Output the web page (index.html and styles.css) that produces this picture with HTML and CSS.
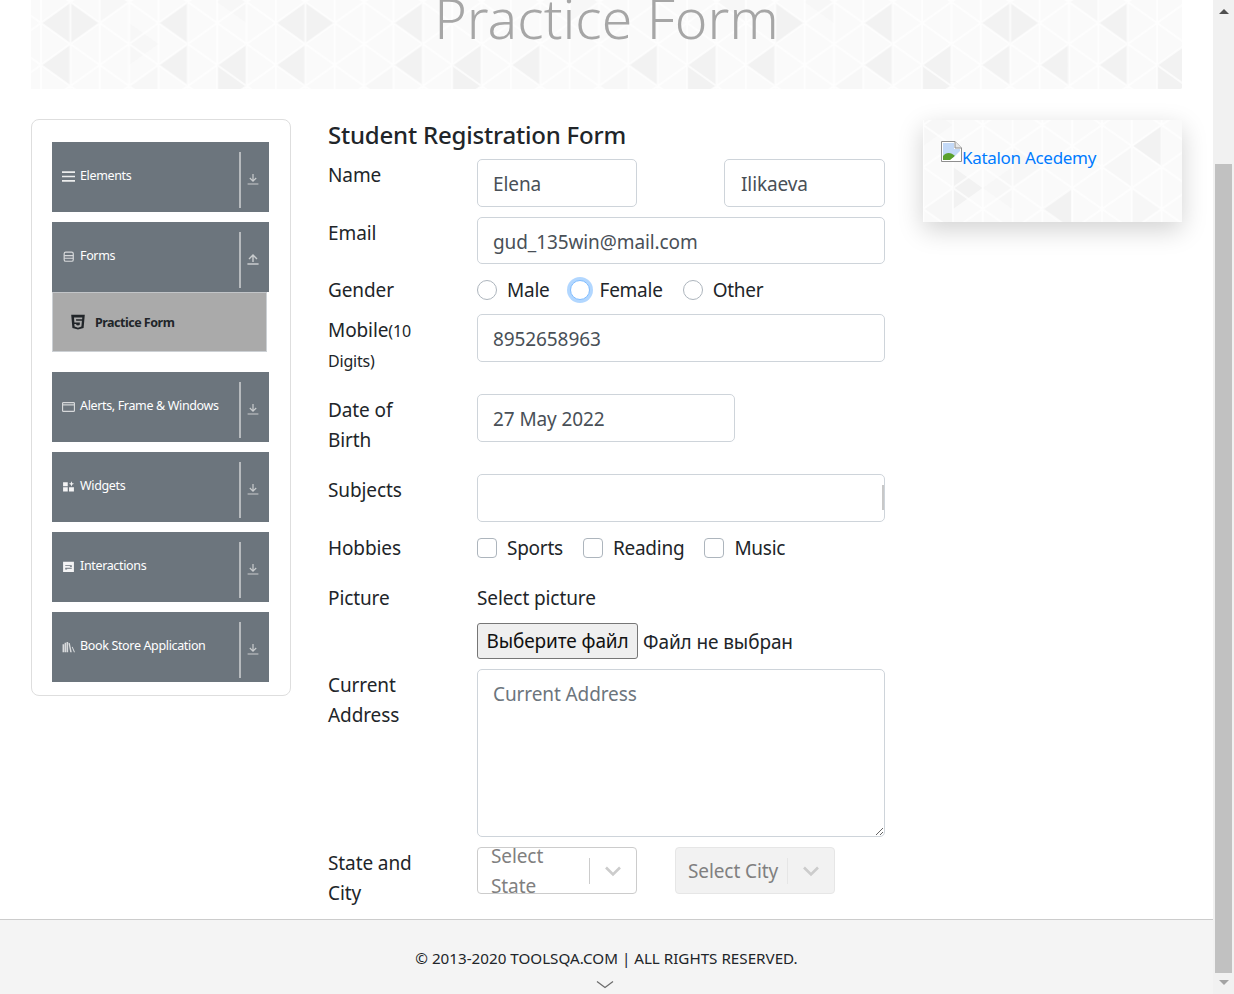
FILE: index.html
```html
<!DOCTYPE html>
<html lang="en">
<head>
<meta charset="utf-8">
<title>Practice Form</title>
<link rel="stylesheet" href="styles.css">
</head>
<body>
<svg class="sprite" aria-hidden="true">
  <defs>
    <pattern id="lines" width="58.74" height="42" patternUnits="userSpaceOnUse" patternTransform="translate(10 23)">
      <path class="mesh" d="M0 0V42M29.37 0V42M58.74 0V42M0 0L29.37 21L58.74 0M0 42L29.37 21L58.74 42M0 0L-29.37 21M58.74 0L29.37 -21M0 42L29.37 63"/>
    </pattern>
    <pattern id="lines2" width="59.6" height="42" patternUnits="userSpaceOnUse" patternTransform="translate(30 26)">
      <path class="mesh" d="M0 0V42M29.8 0V42M59.6 0V42M0 0L29.8 21L59.6 0M0 42L29.8 21L59.6 42"/>
    </pattern>
    <polygon id="tl" points="0,0 29.37,-21 29.37,21"/>
    <polygon id="tr" points="0,-21 29.37,0 0,21"/>
    <symbol id="down" viewBox="0 0 12 12"><path d="M6 1V7.8M2.8 5L6 8.2L9.2 5M.6 11H11.4" fill="none" stroke="currentColor" stroke-width="1.2"/></symbol>
    <symbol id="up" viewBox="0 0 12 12"><path d="M6 9V2.2M2 6L6 2L10 6M.4 11H11.6" fill="none" stroke="currentColor" stroke-width="1.4"/></symbol>
    <symbol id="chev" viewBox="0 0 20 20"><path d="M3 6.5L10 13.5L17 6.5" fill="none" stroke="currentColor" stroke-width="2.6"/></symbol>
  </defs>
</svg>

<div class="app">
  <div class="page">
    <div class="content">
      <header class="banner">
        <svg class="pattern" width="1151" height="89" aria-hidden="true">
          <rect class="tile" width="1151" height="89"/>
          <g class="shade">
            <use href="#tl" x="10" y="23"/><use href="#tr" x="39.4" y="23"/><use href="#tl" x="127.5" y="23"/><use href="#tl" x="245" y="23"/><use href="#tr" x="274.3" y="23"/><use href="#tl" x="362.4" y="23"/>
            <use href="#tl" x="10" y="65"/><use href="#tl" x="127.5" y="65"/><use href="#tl" x="186.2" y="65"/><use href="#tl" x="245" y="65"/><use href="#tr" x="186.2" y="86"/><use href="#tl" x="362.4" y="65"/>
            <use href="#tl" x="421.2" y="65"/><use href="#tl" x="479.9" y="65"/><use href="#tr" x="421.2" y="86"/><use href="#tl" x="597.4" y="65"/><use href="#tl" x="656.1" y="65"/><use href="#tl" x="714.9" y="65"/>
            <use href="#tr" x="744.3" y="23"/><use href="#tl" x="832.4" y="23"/><use href="#tl" x="949.8" y="23"/><use href="#tr" x="979.2" y="23"/><use href="#tl" x="1067.3" y="23"/>
            <use href="#tl" x="832.4" y="65"/><use href="#tl" x="891.1" y="65"/><use href="#tl" x="949.8" y="65"/><use href="#tl" x="1008.6" y="65"/><use href="#tl" x="1067.3" y="65"/><use href="#tl" x="1126" y="65"/>
            <use href="#tr" x="891.1" y="86"/><use href="#tr" x="656.1" y="86"/><use href="#tr" x="1126" y="86"/>
          </g>
          <g class="shade-soft">
            <use href="#tl" x="98.1" y="86"/><use href="#tl" x="333.1" y="86"/><use href="#tl" x="568" y="86"/><use href="#tr" x="68.7" y="2"/><use href="#tl" x="186.2" y="2"/><use href="#tr" x="538.7" y="2"/><use href="#tl" x="685.5" y="2"/><use href="#tl" x="773.6" y="2"/>
            <use href="#tr" x="98.1" y="44"/><use href="#tl" x="803" y="86"/><use href="#tl" x="1038" y="2"/>
          </g>
          <rect class="mesh-fill" width="1151" height="89"/>
        </svg>
        <h1 class="page-title">Practice Form</h1>
      </header>

      <div class="columns">
        <nav class="sidebar">
          <div class="group">
            <div class="group-head">
              <svg class="g-icon" viewBox="0 0 12 12"><path d="M0 2H12M0 6H12M0 10H12" class="ic-stroke"/></svg>
              <span class="g-name">Elements</span>
              <span class="g-rule"></span>
              <svg class="g-arrow"><use href="#down"/></svg>
            </div>
          </div>
          <div class="group">
            <div class="group-head">
              <svg class="g-icon" viewBox="0 0 12 12"><rect x="2" y="2" width="8.4" height="8.4" rx="1.5" class="ic-thin"/><path d="M2 5.2H10.4M2 7.6H10.4" class="ic-thin"/></svg>
              <span class="g-name">Forms</span>
              <span class="g-rule"></span>
              <svg class="g-arrow"><use href="#up"/></svg>
            </div>
            <div class="sub-item">
              <svg class="html5" viewBox="0 0 16 16"><path fill-rule="evenodd" d="M1.2 .8H14.8L13.6 14L8 15.6L2.4 14ZM4 3.4L4.4 8.6H9.9L9.7 11L8 11.6L6.3 11L6.2 9.9H4.3L4.6 12.6L8 13.7L11.4 12.6L11.9 6.7H6.2L6 5.2H12.1L12.3 3.4Z"/></svg>
              <span>Practice Form</span>
            </div>
          </div>
          <div class="group">
            <div class="group-head">
              <svg class="g-icon" viewBox="0 0 12 12"><rect x=".5" y="2.5" width="11" height="8" rx=".8" class="ic-thin"/><path d="M.5 4.5H11.5" class="ic-thin"/></svg>
              <span class="g-name">Alerts, Frame &amp; Windows</span>
              <span class="g-rule"></span>
              <svg class="g-arrow"><use href="#down"/></svg>
            </div>
          </div>
          <div class="group">
            <div class="group-head">
              <svg class="g-icon" viewBox="0 0 12 12"><path class="ic-fill" d="M1 2H5.3V5.7H1ZM1 6.8H5.3V10.5H1ZM6.5 6.8H11V10.5H6.5ZM8.7 1.2L9.5 2.9L11.2 3.5L9.5 4.2L8.7 5.9L8 4.2L6.3 3.5L8 2.9Z"/></svg>
              <span class="g-name">Widgets</span>
              <span class="g-rule"></span>
              <svg class="g-arrow"><use href="#down"/></svg>
            </div>
          </div>
          <div class="group">
            <div class="group-head">
              <svg class="g-icon" viewBox="0 0 12 12"><path class="ic-fill" fill-rule="evenodd" d="M1 1.5H11V11H1ZM3 4.8V5.6H8L7 6.4H9V4.8ZM3 7.2V8.8H5L4 8H9V7.2Z"/></svg>
              <span class="g-name">Interactions</span>
              <span class="g-rule"></span>
              <svg class="g-arrow"><use href="#down"/></svg>
            </div>
          </div>
          <div class="group">
            <div class="group-head">
              <svg class="g-icon" viewBox="0 0 12 12"><path class="ic-dim" d="M.5 4H2V11.2H.5ZM2.4 2.5H3.8V11.2H2.4ZM4.2 1.8H5.7V11.2H4.2ZM6 3L7.2 2.7L9 11.2H7.6ZM9 6.5L9.8 6.2L12 11.2H11Z"/></svg>
              <span class="g-name">Book Store Application</span>
              <span class="g-rule"></span>
              <svg class="g-arrow"><use href="#down"/></svg>
            </div>
          </div>
        </nav>

        <main class="form-col">
          <h5 class="form-title">Student Registration Form</h5>
          <form class="form">
            <div class="row">
              <label class="lbl">Name</label>
              <div class="fields split">
                <input class="ctl half" type="text" value="Elena">
                <input class="ctl half half-wide" type="text" value="Ilikaeva">
              </div>
            </div>
            <div class="row">
              <label class="lbl">Email</label>
              <div class="fields"><input class="ctl ctl-47" type="text" value="gud_135win@mail.com"></div>
            </div>
            <div class="row row-tight">
              <label class="lbl">Gender</label>
              <div class="fields choices">
                <span class="choice"><span class="radio"></span>Male</span>
                <span class="choice"><span class="radio focus"></span>Female</span>
                <span class="choice"><span class="radio"></span>Other</span>
              </div>
            </div>
            <div class="row">
              <label class="lbl">Mobile<small class="hint">(10 Digits)</small></label>
              <div class="fields"><input class="ctl" type="text" value="8952658963"></div>
            </div>
            <div class="row">
              <label class="lbl">Date of Birth</label>
              <div class="fields"><input class="ctl date" type="text" value="27 May 2022"></div>
            </div>
            <div class="row">
              <label class="lbl">Subjects</label>
              <div class="fields"><div class="ctl subject"><span class="caret"></span></div></div>
            </div>
            <div class="row">
              <label class="lbl">Hobbies</label>
              <div class="fields choices">
                <span class="choice"><span class="check"></span>Sports</span>
                <span class="choice"><span class="check"></span>Reading</span>
                <span class="choice"><span class="check"></span>Music</span>
              </div>
            </div>
            <div class="row">
              <label class="lbl">Picture</label>
              <div class="fields">
                <div class="pic-label">Select picture</div>
                <div class="file"><span class="file-btn">Выберите файл</span><span class="file-name">Файл не выбран</span></div>
              </div>
            </div>
            <div class="row">
              <label class="lbl">Current Address</label>
              <div class="fields"><textarea class="ctl area" placeholder="Current Address"></textarea></div>
            </div>
            <div class="row">
              <label class="lbl">State and City</label>
              <div class="fields split selects">
                <div class="sel">
                  <div class="sel-val">Select State</div>
                  <span class="sel-sep"></span>
                  <svg class="sel-chev"><use href="#chev"/></svg>
                </div>
                <div class="sel sel-off">
                  <div class="sel-val">Select City</div>
                  <span class="sel-sep"></span>
                  <svg class="sel-chev"><use href="#chev"/></svg>
                </div>
              </div>
            </div>
          </form>
        </main>

        <aside class="ad-col">
          <div class="ad">
            <svg class="pattern" width="259" height="102" aria-hidden="true">
              <rect class="tile" width="259" height="102"/>
              <g class="shade-soft">
                <use href="#tr" x="90" y="47"/><use href="#tl" x="60" y="68"/><use href="#tl" x="0" y="89"/><use href="#tr" x="209" y="89"/><use href="#tl" x="180" y="47"/><use href="#tr" x="0" y="5"/>
              </g>
              <g class="shade">
                <use href="#tl" x="119" y="89"/><use href="#tr" x="30" y="68"/><use href="#tl" x="210" y="26"/>
              </g>
              <rect class="mesh-fill2" width="259" height="102"/>
            </svg>
            <a class="ad-link" href="#">
              <svg class="broken" viewBox="0 0 21 21"><path d="M.5 .5H14L20.5 7V20.5H.5Z" fill="#fff" stroke="#8e8e8e"/><path d="M2 2H13V8H19V14L15 17H2Z" fill="#c3d9f7"/><path d="M2 19V15C5 11 10 11 14 15L9 19Z" fill="#5aa02c"/><path d="M20 9L9 20H20Z" fill="#fff"/><path d="M14 .5V7H20.5" fill="#e8e8e8" stroke="#8e8e8e"/></svg><span class="ad-text">Katalon Acedemy</span>
            </a>
          </div>
        </aside>
      </div>
    </div>
    <footer class="footer">
      <span class="copy">© 2013-2020 TOOLSQA.COM | ALL RIGHTS RESERVED.</span>
      <svg class="foot-chev" viewBox="0 0 18 9"><path d="M1 1.5L9 7.5L17 1.5" fill="none" stroke="#6b6b6b" stroke-width="1.2"/></svg>
    </footer>
  </div>
  <div class="scrollbar">
    <span class="sb-up"></span>
    <span class="sb-thumb"></span>
    <span class="sb-down"></span>
  </div>
</div>
</body>
</html>
```

FILE: styles.css
```css
* { box-sizing: border-box; }
html, body { height: 100%; margin: 0; overflow: hidden; }
body {
  font-family: "Noto Sans", "Open Sans", "Liberation Sans", sans-serif;
  font-size: 19px;
  line-height: 30px;
  letter-spacing: -.1px;
  color: #212529;
  background: #fff;
}
.sprite { position: absolute; width: 0; height: 0; }
.mesh { fill: none; stroke: #fff; stroke-width: 2; stroke-opacity: .7; }

.app { display: flex; height: 994px; }
.page { width: 1213px; display: flex; flex-direction: column; }
.content { flex: 1; min-height: 0; overflow: hidden; padding: 0 31px; }

/* banner */
.banner { position: relative; height: 89px; overflow: hidden; display: flex; justify-content: center; }
.pattern { position: absolute; left: 0; top: 0; }
.tile { fill: #fafafa; }
.shade { fill: #f2f2f2; }
.shade-soft { fill: #f7f7f7; }
.mesh-fill { fill: url(#lines); }
.mesh-fill2 { fill: url(#lines2); }
.page-title {
  position: relative;
  margin: -27px 0 0;
  font-size: 55.4px;
  line-height: 90px;
  font-weight: 300;
  letter-spacing: 0;
  color: #a6a6a6;
}

.columns { display: flex; margin-top: 30px; align-items: flex-start; }

/* sidebar */
.sidebar {
  width: 260px;
  flex: none;
  border: 1px solid #dedede;
  border-radius: 8px;
  padding: 22px 21px 13px 20px;
  display: flex;
  flex-direction: column;
  gap: 10px;
}
.group-head {
  height: 70px;
  background: #6c757d;
  color: #fff;
  display: flex;
  align-items: flex-start;
  padding: 10px 0 0 10px;
}
.g-icon { width: 13px; height: 13px; flex: none; margin: 18px 5px 0 0; }
.ic-stroke { fill: none; stroke: #eceded; stroke-width: 1.6; }
.ic-thin { fill: none; stroke: #d6d8da; stroke-width: 1.1; }
.ic-fill { fill: #f4f4f5; }
.ic-dim { fill: #d8dadc; }
.g-name { flex: 1; font-size: 12.5px; line-height: 18px; letter-spacing: -.35px; margin-top: 15px; white-space: nowrap; }
.g-rule { width: 2px; height: 56px; background: #b6babd; flex: none; }
.g-arrow { width: 12px; height: 12px; flex: none; margin: 21px 10px 0 6px; color: #c9ccce; }
.sub-item {
  width: 215px;
  height: 60px;
  background: #aaa;
  border: 1px solid #ccd0d4;
  border-top-color: #c2c5c8;
  display: flex;
  align-items: center;
  padding-left: 17px;
  margin-bottom: 10px;
  font-size: 12.5px;
  font-weight: 700;
  letter-spacing: -.5px;
}
.sub-item span { position: relative; top: 1px; }
.html5 { width: 16px; height: 16px; margin-right: 9px; fill: #212529; flex: none; }

/* form */
.form-col { width: 557px; flex: none; margin-left: 37px; }
.form-title { margin: 0 0 9px; padding-top: 1px; font-size: 24px; line-height: 30px; font-weight: 500; letter-spacing: -.2px; }
.row { display: flex; margin-bottom: 10px; }
.row-tight { margin-bottom: 0; }
.lbl { width: 149px; flex: none; padding: 1px 40px 9px 0; }
.hint { font-size: 16px; line-height: 1; letter-spacing: -.2px; }
.fields { width: 408px; flex: none; }
.split { display: flex; justify-content: space-between; }
.ctl {
  display: block;
  width: 100%;
  height: 48px;
  padding: 10px 15px 8px;
  border: 1px solid #ced4da;
  border-radius: 5px;
  background: #fff;
  font: inherit;
  letter-spacing: inherit;
  color: #495057;
  outline: 0;
}
.ctl-47 { height: 47px; }
.half { width: 160px; }
.half-wide { width: 161px; padding-left: 16px; }
.date { width: 258px; }
.subject { position: relative; }
.caret { position: absolute; right: 0; top: 10px; width: 2px; height: 25px; background: #c8c8c8; }
.area { height: 168px; padding-top: 9px; resize: both; }
.area::placeholder { color: #6c757d; opacity: 1; }

.choices { display: flex; gap: 20px; padding-top: 1px; letter-spacing: -.25px; }
.choice { display: inline-flex; align-items: flex-start; gap: 10px; }
.radio, .check { width: 20px; height: 20px; flex: none; margin-top: 5px; border: 1px solid #adb5bd; background: #fff; }
.radio { border-radius: 50%; }
.radio.focus { border-color: #80bdff; box-shadow: 0 0 0 3px rgba(0, 123, 255, .3); }
.check { border-radius: 4px; }

.pic-label { padding-top: 1px; margin-bottom: 10px; }
.file { display: flex; align-items: center; height: 36px; }
.file-btn {
  display: block;
  width: 161px;
  height: 36px;
  line-height: 34px;
  text-align: center;
  background: #efefef;
  border: 1px solid #767676;
  border-radius: 3px;
  color: #111;
}
.file-name { margin-left: 5px; padding-top: 1px; color: #212529; }

.selects { justify-content: flex-start; gap: 38px; }
.sel {
  width: 160px;
  height: 47px;
  border: 1px solid #ccc;
  border-radius: 4px;
  display: flex;
  align-items: center;
  overflow: hidden;
  color: #808080;
}
.sel-val { flex: 1; min-width: 0; padding-left: 13px; }
.sel-sep { width: 1px; height: 26px; background: #ccc; flex: none; }
.sel-chev { width: 20px; height: 20px; margin: 0 13px 0 13px; color: #ccc; flex: none; }
.sel-off { background: #f2f2f2; border-color: #e6e6e6; }
.sel-off .sel-val { white-space: nowrap; padding-left: 12px; }
.sel-off .sel-sep { background: #e6e6e6; }

/* ad */
.ad-col { width: 259px; flex: none; margin-left: 38px; padding-top: 1px; }
.ad { position: relative; height: 102px; box-shadow: 0 8px 24px rgba(0, 0, 0, .18); padding: 21px 18px; }
.ad-link { position: relative; display: flex; align-items: flex-start; color: #007bff; text-decoration: none; font-size: 17px; line-height: 30px; letter-spacing: -.3px; }
.ad-text { margin-top: 2px; }
.broken { width: 21px; height: 21px; flex: none; }

/* footer */
.footer {
  flex: none;
  height: 75px;
  background: #f4f4f4;
  border-top: 1px solid #ccc;
  display: flex;
  flex-direction: column;
  align-items: center;
  padding-top: 27px;
  font-size: 15.2px;
  line-height: 22px;
  letter-spacing: 0;
}
.foot-chev { width: 18px; height: 9px; margin: 11px 4px 0 0; }

/* scrollbar */
.scrollbar { width: 21px; flex: none; background: #f1f1f1; display: flex; flex-direction: column; align-items: center; position: relative; }
.sb-up { width: 0; height: 0; margin-top: 9px; border: 5px solid transparent; border-top: 0; border-bottom: 5px solid #505050; }
.sb-thumb { width: 17px; height: 809px; margin-top: 150px; background: #c1c1c1; }
.sb-down { width: 0; height: 0; margin-top: 7px; border: 5px solid transparent; border-bottom: 0; border-top: 5px solid #a3a3a3; }
```
